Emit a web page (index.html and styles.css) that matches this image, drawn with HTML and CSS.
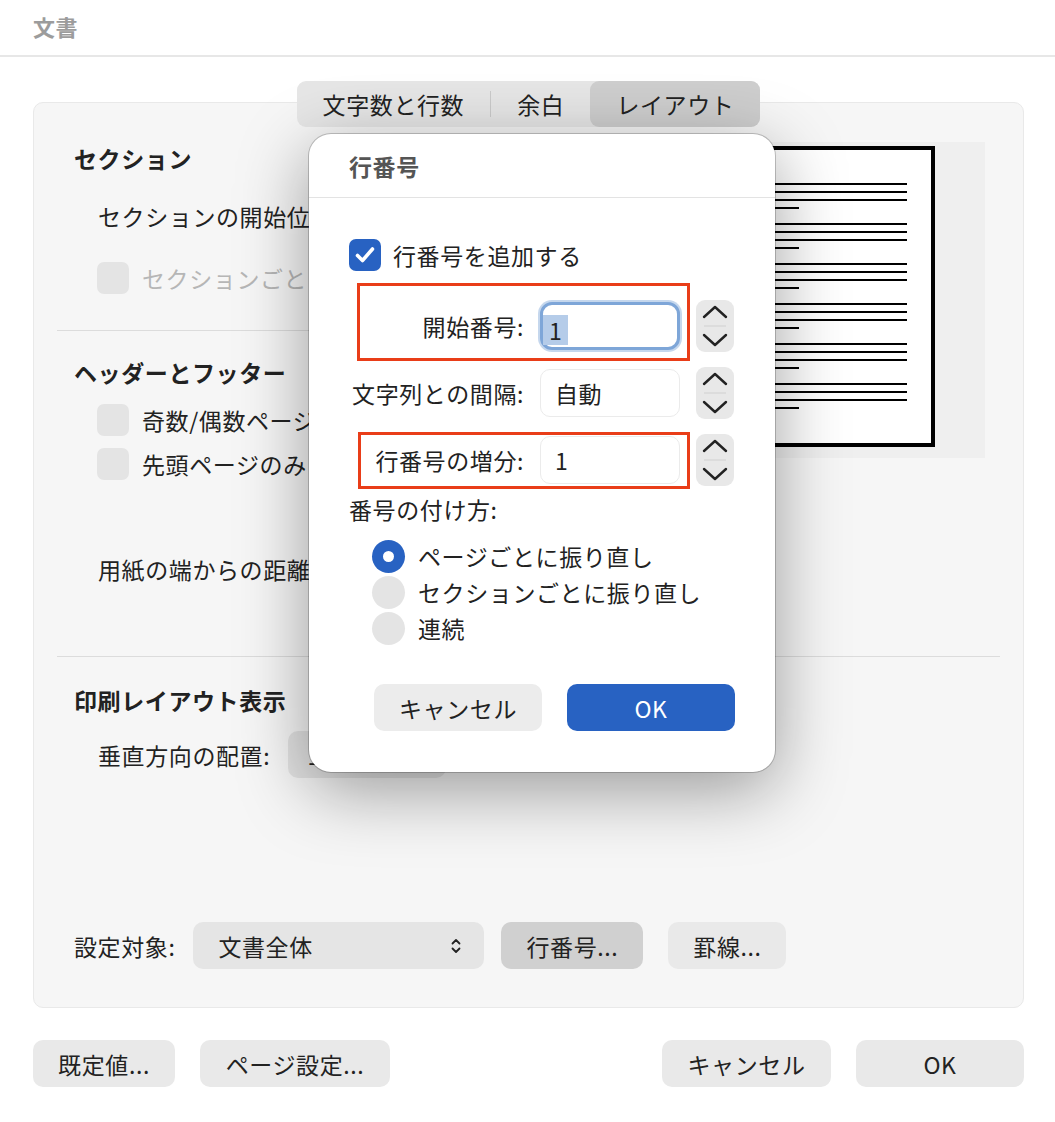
FILE: index.html
```html
<!DOCTYPE html>
<html lang="ja">
<head>
  <meta charset="UTF-8">
  <title>文書</title>
  <link rel="stylesheet" href="styles.css">
</head>
<body>
  <div class="window">
    <header class="titlebar">文書</header>

    <div class="content">
      <!-- tab switcher -->
      <nav class="tabs">
        <div class="tab-group">
          <span class="tab">文字数と行数</span>
          <span class="tab-sep"></span>
          <span class="tab">余白</span>
          <span class="tab active">レイアウト</span>
        </div>
      </nav>

      <div class="panel">
        <div class="top-area">
          <div class="left-col">
            <h3 class="group-title">セクション</h3>
            <div class="line first-line">セクションの開始位置:</div>
            <div class="check-row disabled first-check">
              <span class="box"></span>
              <span>セクションごとに</span>
            </div>
            <hr class="rule short">

            <h3 class="group-title hf-title">ヘッダーとフッター</h3>
            <div class="check-row hf-check">
              <span class="box"></span>
              <span>奇数/偶数ページ</span>
            </div>
            <div class="check-row hf-check2">
              <span class="box"></span>
              <span>先頭ページのみ</span>
            </div>
            <div class="line distance">用紙の端からの距離:</div>
          </div>

          <!-- page preview -->
          <div class="preview">
            <svg width="300" height="316" viewBox="0 0 300 316">
              <rect x="39" y="6" width="209" height="297" fill="#fff" stroke="#000" stroke-width="4"/>
              <g stroke="#000" stroke-width="2">
                <line x1="45" y1="42" x2="222" y2="42"/><line x1="45" y1="50" x2="222" y2="50"/><line x1="45" y1="58" x2="222" y2="58"/><line x1="45" y1="66" x2="114" y2="66"/>
                <line x1="45" y1="82" x2="222" y2="82"/><line x1="45" y1="90" x2="222" y2="90"/><line x1="45" y1="98" x2="222" y2="98"/><line x1="45" y1="106" x2="114" y2="106"/>
                <line x1="45" y1="122" x2="222" y2="122"/><line x1="45" y1="130" x2="222" y2="130"/><line x1="45" y1="138" x2="222" y2="138"/><line x1="45" y1="146" x2="114" y2="146"/>
                <line x1="45" y1="162" x2="222" y2="162"/><line x1="45" y1="170" x2="222" y2="170"/><line x1="45" y1="178" x2="222" y2="178"/><line x1="45" y1="186" x2="114" y2="186"/>
                <line x1="45" y1="202" x2="222" y2="202"/><line x1="45" y1="210" x2="222" y2="210"/><line x1="45" y1="218" x2="222" y2="218"/><line x1="45" y1="226" x2="114" y2="226"/>
                <line x1="45" y1="242" x2="222" y2="242"/><line x1="45" y1="250" x2="222" y2="250"/><line x1="45" y1="258" x2="222" y2="258"/><line x1="45" y1="266" x2="114" y2="266"/>
              </g>
            </svg>
          </div>
        </div>

        <hr class="rule wide">

        <h3 class="group-title print-title">印刷レイアウト表示</h3>
        <div class="align-row">
          <span class="label">垂直方向の配置:</span>
          <span class="popup">上</span>
        </div>

        <div class="apply-row">
          <span class="label">設定対象:</span>
          <span class="select">
            文書全体
            <svg class="updown" width="10" height="20" viewBox="0 0 10 20">
              <path d="M1.5 7.5 L5 4 L8.5 7.5 M1.5 12.5 L5 16 L8.5 12.5" fill="none" stroke="#222" stroke-width="1.8" stroke-linecap="round" stroke-linejoin="round"/>
            </svg>
          </span>
          <span class="btn pressed lines-btn">行番号...</span>
          <span class="btn borders-btn">罫線...</span>
        </div>
      </div>

      <div class="footer">
        <span class="btn w-default">既定値...</span>
        <span class="btn w-page">ページ設定...</span>
        <span class="btn w-cancel push">キャンセル</span>
        <span class="btn w-ok">OK</span>
      </div>
    </div>

    <!-- line numbers sheet -->
    <div class="sheet">
      <div class="sheet-head">行番号</div>
      <div class="sheet-body">
        <div class="check-row add-row">
          <span class="box checked">
            <svg width="32" height="32" viewBox="0 0 32 32">
              <path d="M8.5 16.5 L13.5 21.5 L23.5 10" fill="none" stroke="#fff" stroke-width="3.6" stroke-linecap="round" stroke-linejoin="round"/>
            </svg>
          </span>
          <span>行番号を追加する</span>
        </div>

        <div class="num-grid">
          <span class="num-label">開始番号:</span>
          <span class="field focused"><span class="sel">1</span></span>
          <span class="stepper">
            <svg width="38" height="52" viewBox="0 0 38 52">
              <path d="M8 17 L19 7 L30 17 M8 35 L19 45 L30 35" fill="none" stroke="#222" stroke-width="2.4" stroke-linecap="round" stroke-linejoin="round"/>
              <line x1="8" y1="26" x2="30" y2="26" stroke="#d0d0d0" stroke-width="1"/>
            </svg>
          </span>

          <span class="num-label">文字列との間隔:</span>
          <span class="field">自動</span>
          <span class="stepper">
            <svg width="38" height="52" viewBox="0 0 38 52">
              <path d="M8 17 L19 7 L30 17 M8 35 L19 45 L30 35" fill="none" stroke="#222" stroke-width="2.4" stroke-linecap="round" stroke-linejoin="round"/>
              <line x1="8" y1="26" x2="30" y2="26" stroke="#d0d0d0" stroke-width="1"/>
            </svg>
          </span>

          <span class="num-label">行番号の増分:</span>
          <span class="field">1</span>
          <span class="stepper">
            <svg width="38" height="52" viewBox="0 0 38 52">
              <path d="M8 17 L19 7 L30 17 M8 35 L19 45 L30 35" fill="none" stroke="#222" stroke-width="2.4" stroke-linecap="round" stroke-linejoin="round"/>
              <line x1="8" y1="26" x2="30" y2="26" stroke="#d0d0d0" stroke-width="1"/>
            </svg>
          </span>
        </div>

        <div class="line plain numbering">番号の付け方:</div>
        <div class="radios">
          <div class="radio-row"><span class="radio on"></span>ページごとに振り直し</div>
          <div class="radio-row"><span class="radio"></span>セクションごとに振り直し</div>
          <div class="radio-row"><span class="radio"></span>連続</div>
        </div>

        <div class="sheet-buttons">
          <span class="btn sheet-btn">キャンセル</span>
          <span class="btn sheet-btn primary">OK</span>
        </div>
      </div>

      <!-- red annotation frames -->
      <div class="mark mark-start"></div>
      <div class="mark mark-step"></div>
    </div>
  </div>
</body>
</html>
```

FILE: styles.css
```css
* {
  box-sizing: border-box;
}

body {
  margin: 0;
  background: #fff;
  font-family: "Noto Sans CJK JP", "Noto Sans", sans-serif;
  font-size: 23px;
  letter-spacing: 0.6px;
  color: #222;
}

.window {
  position: relative;
  width: 1055px;
  height: 1122px;
}

.titlebar {
  height: 57px;
  border-bottom: 2px solid #e7e7e7;
  padding-left: 33px;
  padding-bottom: 3px;
  display: flex;
  align-items: center;
  font-weight: bold;
  font-size: 22px;
  color: #9c9c9c;
}

.content {
  padding: 24px 31px 0 33px;
}

/* Tabs */
.tabs {
  display: flex;
  justify-content: center;
  position: relative;
  z-index: 1;
  margin-bottom: -25px;
}

.tab-group {
  display: flex;
  align-items: center;
  height: 46px;
  background: #e6e6e6;
  border-radius: 9px;
}

.tab {
  padding: 0 26px;
  line-height: 46px;
  border-radius: 9px;
}

.tab.active {
  background: #cecece;
}

.tab-sep {
  width: 1px;
  height: 26px;
  background: #cacaca;
}

/* Main panel */
.panel {
  height: 906px;
  background: #f6f6f6;
  border: 1px solid #e9e9e9;
  border-radius: 10px;
  padding: 0 38px 38px 40px;
  display: flex;
  flex-direction: column;
}

.top-area {
  display: flex;
  margin-top: 39px;
}

.left-col {
  flex: 1;
}

.group-title {
  margin: 0;
  font-size: 23px;
  font-weight: bold;
  line-height: 32px;
}

.line {
  line-height: 32px;
  padding-left: 24px;
  white-space: nowrap;
}

.first-line {
  margin-top: 26px;
}

.check-row {
  display: flex;
  align-items: center;
  height: 32px;
  padding-left: 23px;
  white-space: nowrap;
}

.check-row .box {
  width: 32px;
  height: 32px;
  border-radius: 7px;
  background: #e4e4e4;
  margin-right: 13px;
  flex: none;
}

.check-row.disabled {
  color: #b6b6b6;
}

.first-check {
  margin-top: 30px;
}

.rule {
  border: none;
  height: 1px;
  background: #dcdcdc;
  margin: 0;
}

.rule.short {
  margin: 36px 0 0 -17px;
}

.hf-title {
  margin-top: 25px;
}

.hf-check {
  margin-top: 16px;
}

.hf-check2 {
  margin-top: 12px;
}

.distance {
  margin-top: 73px;
}

.preview {
  width: 300px;
  height: 316px;
  background: #efefef;
  flex: none;
}

.preview svg {
  display: block;
}

.rule.wide {
  margin: 71px -15px 0 -17px;
}

.print-title {
  margin-top: 27px;
}

.align-row {
  display: flex;
  align-items: center;
  margin-top: 15px;
  padding-left: 24px;
}

.align-row .label {
  margin-right: 18px;
}

.popup {
  width: 158px;
  height: 47px;
  line-height: 47px;
  padding-left: 20px;
  background: #e3e3e3;
  border-radius: 10px;
}

.apply-row {
  margin-top: auto;
  display: flex;
  align-items: center;
}

.apply-row .label {
  margin-right: 18px;
}

.select {
  width: 291px;
  height: 47px;
  display: flex;
  align-items: center;
  justify-content: space-between;
  padding: 0 23px 0 25px;
  background: #e5e5e5;
  border-radius: 10px;
}

.updown {
  display: block;
}

.btn {
  height: 47px;
  display: flex;
  align-items: center;
  justify-content: center;
  background: #e9e9e9;
  border-radius: 10px;
  white-space: nowrap;
}

.btn.pressed {
  background: #d0d0d0;
}

.lines-btn {
  width: 142px;
  margin-left: 17px;
}

.borders-btn {
  width: 118px;
  margin-left: 25px;
}

/* Footer buttons */
.footer {
  display: flex;
  gap: 25px;
  margin-top: 32px;
}

.w-default { width: 142px; }
.w-page { width: 190px; }
.w-cancel { width: 169px; }
.w-ok { width: 168px; }

.push {
  margin-left: auto;
}

/* Line numbers sheet */
.sheet {
  position: absolute;
  left: 309px;
  top: 134px;
  width: 466px;
  height: 638px;
  background: #fff;
  border-radius: 22px;
  z-index: 2;
  box-shadow: 0 0 0 1px rgba(0, 0, 0, 0.2), 0 18px 70px rgba(0, 0, 0, 0.38);
}

.sheet-head {
  height: 64px;
  border-bottom: 1px solid #e3e3e3;
  padding-left: 40px;
  display: flex;
  align-items: center;
  font-weight: bold;
  color: #555;
}

.sheet-body {
  padding: 0 40px 41px;
}

.add-row {
  margin-top: 41px;
  padding-left: 0;
}

.check-row .box.checked {
  background: #2862c2;
  margin-right: 12px;
}

.box.checked svg {
  display: block;
}

.num-grid {
  display: grid;
  grid-template-columns: 175px 140px 38px;
  grid-auto-rows: 52px;
  column-gap: 16px;
  row-gap: 15px;
  align-items: center;
  margin-top: 29px;
}

.num-label {
  text-align: right;
  white-space: nowrap;
}

.field {
  height: 48px;
  line-height: 46px;
  border: 1px solid #ebebeb;
  border-radius: 10px;
  background: #fff;
  padding-left: 14px;
}

.field.focused {
  border: 3px solid #7ea6d8;
  box-shadow: 0 0 0 2px rgba(126, 166, 216, 0.45);
  padding-left: 0;
  line-height: 42px;
  border-radius: 12px;
}

.sel {
  display: inline-block;
  background: #b5cce9;
  line-height: 30px;
  padding: 0 6px;
  vertical-align: middle;
}

.stepper {
  height: 52px;
  background: #e8e8e8;
  border-radius: 9px;
}

.stepper svg {
  display: block;
}

.line.plain {
  padding-left: 0;
}

.numbering {
  margin-top: 7px;
}

.radios {
  margin-top: 13px;
  padding-left: 23px;
}

.radio-row {
  display: flex;
  align-items: center;
  height: 36px;
}

.radio {
  width: 33px;
  height: 33px;
  border-radius: 50%;
  background: #e4e4e4;
  margin-right: 13px;
  flex: none;
}

.radio.on {
  background: #2862c2;
  display: flex;
  align-items: center;
  justify-content: center;
}

.radio.on::after {
  content: "";
  width: 11px;
  height: 11px;
  border-radius: 50%;
  background: #fff;
}

.sheet-buttons {
  display: flex;
  justify-content: flex-end;
  gap: 25px;
  margin-top: 38px;
}

.sheet-btn {
  width: 168px;
  background: #ececec;
}

.sheet-btn.primary {
  background: #2862c2;
  color: #fff;
}

/* red highlight frames */
.mark {
  position: absolute;
  border: 3px solid #e93d18;
}

.mark-start {
  left: 48px;
  top: 149px;
  width: 333px;
  height: 78px;
}

.mark-step {
  left: 49px;
  top: 298px;
  width: 332px;
  height: 57px;
}
```
